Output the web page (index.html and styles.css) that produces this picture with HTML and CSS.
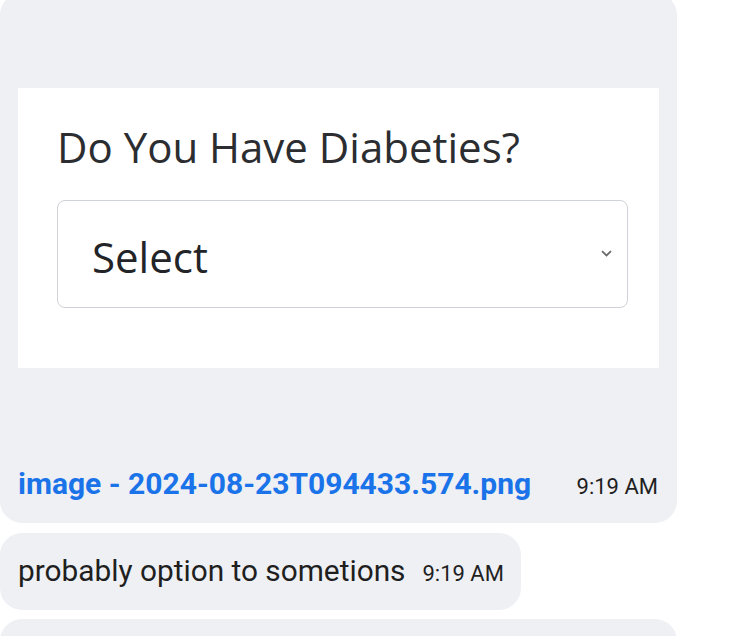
FILE: index.html
```html
<!DOCTYPE html>
<html>
<head>
<meta charset="utf-8">
<link rel="stylesheet" href="styles.css">
</head>
<body>
<div class="thread">
  <div class="bubble bubble-image">
    <div class="shot">
      <div class="shot-label">Do You Have Diabeties?</div>
      <div class="shot-select">
        <span class="shot-select-text">Select</span>
        <svg class="chev" width="11" height="7" viewBox="0 0 11 7"><path d="M1 1.2 L5.5 5.5 L10 1.2" fill="none" stroke="#6b6b6b" stroke-width="1.8"/></svg>
      </div>
    </div>
    <div class="file-row">
      <span class="file-name">image - 2024-08-23T094433.574.png</span>
      <span class="time">9:19 AM</span>
    </div>
  </div>
  <div class="bubble bubble-text">
    <span class="msg">probably option to sometions</span>
    <span class="time">9:19 AM</span>
  </div>
  <div class="bubble bubble-next"></div>
</div>
</body>
</html>
```

FILE: styles.css
```css
html, body {
  margin: 0;
  padding: 0;
  background: #ffffff;
  overflow: hidden;
}
body {
  font-family: Roboto, "Liberation Sans", sans-serif;
  color: #1f1f1f;
}
.thread {
  display: flex;
  flex-direction: column;
  align-items: flex-start;
  gap: 10px;
  margin-top: -7px;
}
.bubble {
  background: #eef0f4;
  border-radius: 22px;
  box-sizing: border-box;
}
.bubble-image {
  width: 677px;
  padding: 95px 18px 0 18px;
  height: 530px;
}
.shot {
  background: #ffffff;
  width: 641px;
  height: 280px;
  box-sizing: border-box;
  padding: 30px 31px 0 39px;
}
.shot-label {
  font-family: "Open Sans", "Noto Sans", sans-serif;
  font-size: 42px;
  line-height: 58px;
  color: #2b2d31;
}
.shot-select {
  margin-top: 24px;
  height: 108px;
  border: 1.5px solid #cfd2d6;
  border-radius: 8px;
  box-sizing: border-box;
  display: flex;
  align-items: center;
  justify-content: space-between;
  padding: 0 15px 0 34px;
}
.shot-select-text {
  font-family: "Open Sans", "Noto Sans", sans-serif;
  font-size: 42px;
  color: #222428;
  margin-top: 4px;
}
.chev {
  display: block;
  margin-top: -2px;
}
.file-row {
  display: flex;
  align-items: baseline;
  justify-content: space-between;
  margin-top: 98px;
  padding-right: 1px;
}
.file-name {
  color: #1a73e8;
  font-weight: 700;
  font-size: 30px;
}
.time {
  font-size: 22px;
  color: #1f1f1f;
  white-space: nowrap;
}
.bubble-text {
  height: 77px;
  display: flex;
  align-items: center;
  padding: 0 17px 0 18px;
  gap: 17px;
  white-space: nowrap;
}
.msg {
  font-size: 29.8px;
  color: #1f1f1f;
  margin-top: -3px;
}
.bubble-text .time {
  margin-top: 4px;
}
.bubble-next {
  width: 677px;
  height: 60px;
  margin-top: -1px;
}
```
